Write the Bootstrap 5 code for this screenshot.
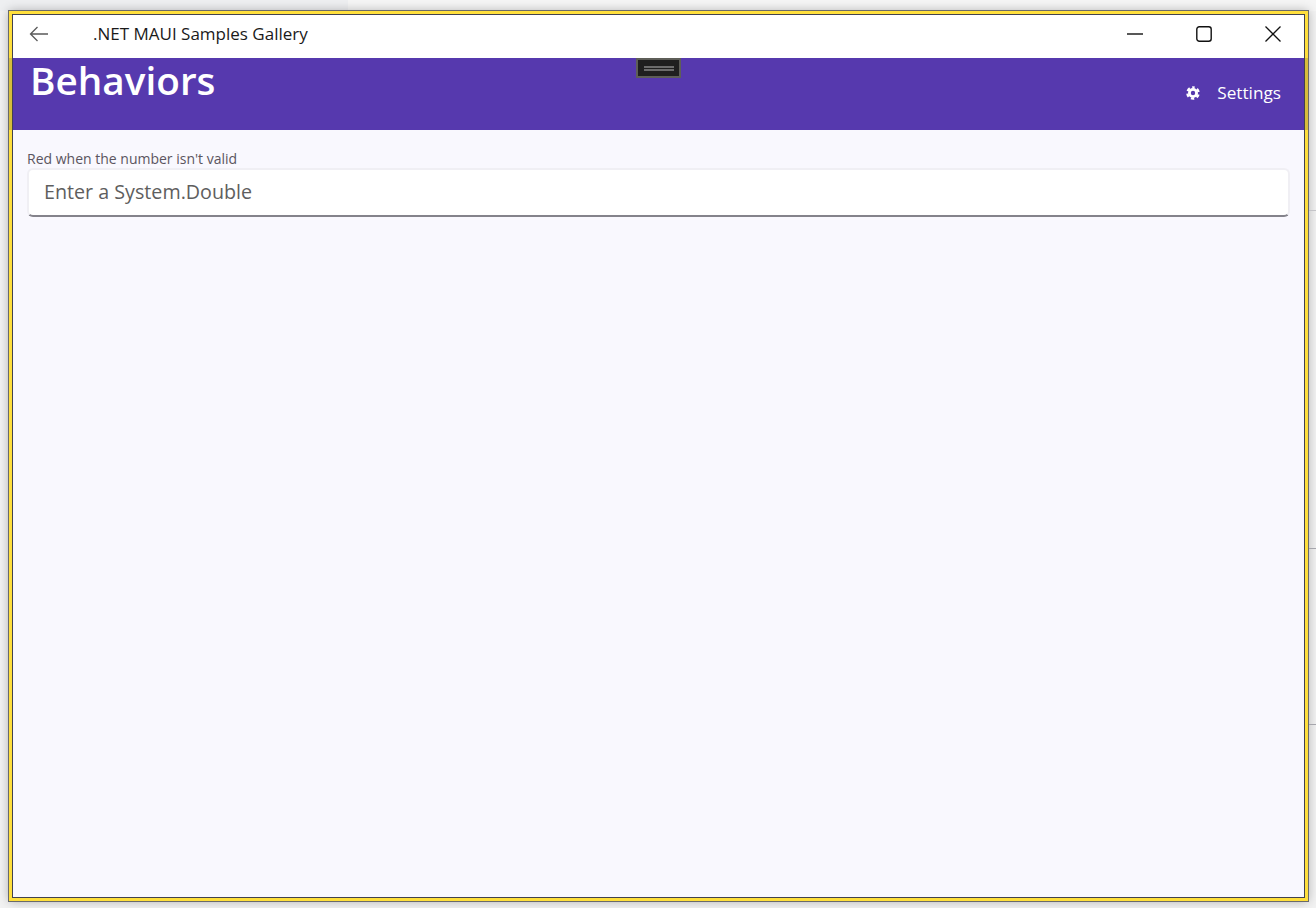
<!DOCTYPE html>
<html lang="en">
<head>
<meta charset="utf-8">
<title>.NET MAUI Samples Gallery</title>
<link href="https://cdn.jsdelivr.net/npm/bootstrap@5.3.0/dist/css/bootstrap.min.css" rel="stylesheet">
<style>
html, body { height: 100%; }
body { background: linear-gradient(90deg, #eeeff1 348px, #f5f5f5 348px) top / 100% 11px no-repeat, #f2f2f2; font-family: "Open Sans", "Noto Sans", sans-serif; overflow: hidden; }
.desk-frame { height: 908px; padding: 11px 8px 7px 9px; position: relative; }
.desk-tick { position: absolute; right: 0; width: 7px; height: 1px; background: #a6a6ac; }
.tick-a { top: 210px; background: #c4c4c8; }
.tick-b { top: 548px; }
.tick-c { top: 724px; }
.app-window { height: 100%; border: 3px solid #ffdf3c; outline: 1px solid #6a6a6a; box-shadow: 0 0 10px rgba(0,0,0,.3); }
.app-inner { height: 100%; border: 1px solid #42424e; background: #f9f8fe; position: relative; }
.title-strip { height: 43px; background: #fff; color: #1a1a1a; padding-bottom: 6px; }
.back-btn { width: 52px; }
.app-title { font-size: 17px; margin-left: 28px; }
.win-controls { gap: 53px; padding-right: 23px; }
.page-head { height: 72px; background: #5639ae; color: #fff; padding: 0 23px 0 17px; position: relative; }
.page-head::before, .page-head::after { content: ""; position: absolute; top: 0; bottom: 0; width: 3px; background: rgba(70,70,70,.22); }
.page-head::before { left: -4px; }
.page-head::after { right: -4px; }
.page-title { font-size: 38.7px; font-weight: 600; line-height: 44px; margin: 0; }
.settings-link { font-size: 17.2px; margin-top: 22px; gap: 17px; }
.drag-grip { position: absolute; left: 623px; top: 43px; width: 45px; height: 20px; background: #1f1f1f; border: 2px solid #5e5e58; display: flex; flex-direction: column; justify-content: center; align-items: center; gap: 1px; }
.drag-grip i { display: block; width: 30px; height: 2px; background: #6c6c6c; }
.field-zone { padding: 20px 14px 0 14px; }
.field-label { font-size: 14px; color: #5b5560; line-height: 18px; }
.value-input.form-control { height: 49px; border: 2px solid #f0eff4; border-bottom: 2px solid #84838b; border-radius: 6px; background: #fff; font-size: 19.7px; padding: 0 15px 2px; color: #5e5e5e; box-shadow: none; }
.value-input.form-control::placeholder { color: #5e5e5e; opacity: 1; }
</style>
</head>
<body>
<div class="desk-frame">
  <div class="desk-tick tick-a"></div>
  <div class="desk-tick tick-b"></div>
  <div class="desk-tick tick-c"></div>
  <div class="app-window">
    <div class="app-inner d-flex flex-column">
      <div class="title-strip d-flex align-items-center">
        <div class="back-btn d-flex justify-content-center">
          <svg width="20" height="16" viewBox="0 0 20 16" fill="none" stroke="#5a5a5a" stroke-width="1.3"><path d="M19 8H1.500M8.500 1 1.500 8l7 7"/></svg>
        </div>
        <span class="app-title">.NET MAUI Samples Gallery</span>
        <div class="win-controls ms-auto d-flex">
          <svg width="16" height="16" viewBox="0 0 16 16" fill="none" stroke="#111" stroke-width="1.4"><path d="M0 8h16"/></svg>
          <svg width="16" height="16" viewBox="0 0 16 16" fill="none" stroke="#111" stroke-width="1.4"><rect x=".8" y=".8" width="14.400" height="14.400" rx="2.500"/></svg>
          <svg width="16" height="16" viewBox="0 0 16 16" fill="none" stroke="#111" stroke-width="1.300"><path d="M.5.5l15 15M15.500.5l-15 15"/></svg>
        </div>
      </div>
      <div class="page-head d-flex justify-content-between align-items-start">
        <h1 class="page-title">Behaviors</h1>
        <div class="settings-link d-flex align-items-center">
          <svg width="14" height="14" viewBox="0 0 14 14" fill="none" stroke="#fff"><circle cx="7" cy="7" r="3.600" stroke-width="2.800"/><circle cx="7" cy="7" r="5.700" stroke-width="2.200" stroke-dasharray="3.400 2.569" transform="rotate(-90 7 7)" stroke-dashoffset="1.700"/></svg>
          <span>Settings</span>
        </div>
      </div>
      <div class="drag-grip"><i></i><i></i></div>
      <div class="field-zone">
        <label class="field-label d-block" for="val">Red when the number isn't valid</label>
        <input id="val" class="form-control value-input" type="text" placeholder="Enter a System.Double">
      </div>
    </div>
  </div>
</div>
<script src="https://cdn.jsdelivr.net/npm/bootstrap@5.3.0/dist/js/bootstrap.bundle.min.js"></script>
</body>
</html>
